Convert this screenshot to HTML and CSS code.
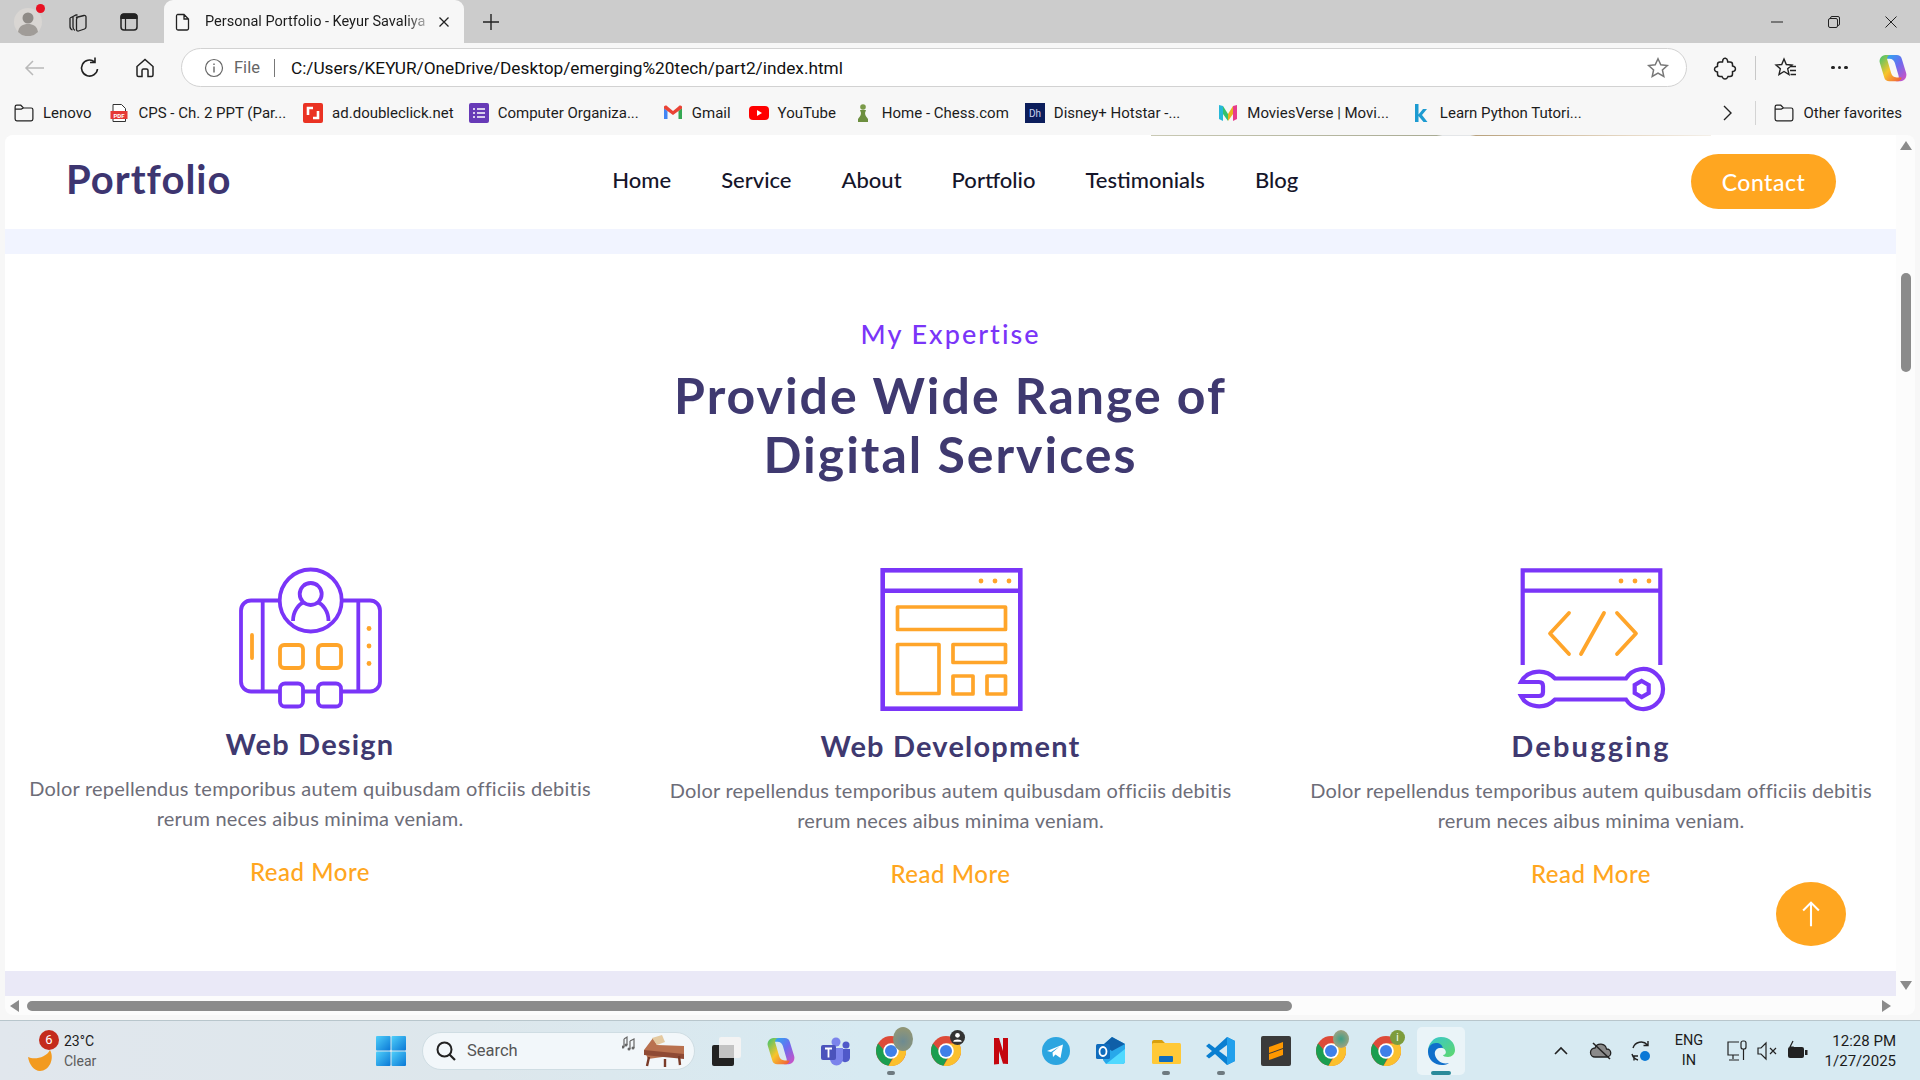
FILE: index.html
```html
<!DOCTYPE html>
<html lang="en">
<head>
<meta charset="utf-8">
<title>Personal Portfolio - Keyur Savaliya</title>
<link rel="stylesheet" href="styles.css">
</head>
<body>
<svg class="defs" width="0" height="0" aria-hidden="true">
  <defs>
    <linearGradient id="cop1" x1="0" y1="0" x2="1" y2="1"><stop offset="0" stop-color="#22b4f0"/><stop offset=".5" stop-color="#6a6cf0"/><stop offset="1" stop-color="#d850c0"/></linearGradient>
    <linearGradient id="cop2" x1="0" y1="0" x2="1" y2="1"><stop offset="0" stop-color="#f0553a"/><stop offset=".5" stop-color="#f7c52c"/><stop offset="1" stop-color="#38c472"/></linearGradient>
    <linearGradient id="win" x1="0" y1="0" x2="1" y2="1"><stop offset="0" stop-color="#4fcffa"/><stop offset="1" stop-color="#0a78d6"/></linearGradient>
    <linearGradient id="edge" x1="0" y1="0" x2="1" y2="1"><stop offset="0" stop-color="#37c6d0"/><stop offset="1" stop-color="#5fd86b"/></linearGradient>
    <symbol id="chrome" viewBox="0 0 24 24">
      <circle cx="12" cy="12" r="12" fill="#dd4b39"/>
      <path d="M1.600 6A12 12 0 0 0 10 23.800L15 14 7 12Z" fill="#1a9e50"/>
      <path d="M22.400 6A12 12 0 0 1 10 23.800L15.500 15 12 6Z" fill="#fbc02d"/>
      <circle cx="12" cy="12" r="6.200" fill="#fff"/>
      <circle cx="12" cy="12" r="4.800" fill="#3f80e8"/>
    </symbol>
    <symbol id="copilot" viewBox="0 0 24 24">
      <path d="M8 1.500H15C17 1.500 18.500 2.500 19 4.500L22.500 16C23.500 19.500 21 22.500 18 22.500H14C16.500 22.500 17 20 16.400 18L13.500 8C13 6 11.500 4.500 9 4.500H5C5.500 3 6.500 1.500 8 1.500Z" fill="url(#cop1)"/>
      <path transform="rotate(180 12 12)" d="M8 1.500H15C17 1.500 18.500 2.500 19 4.500L22.500 16C23.500 19.500 21 22.500 18 22.500H14C16.500 22.500 17 20 16.400 18L13.500 8C13 6 11.500 4.500 9 4.500H5C5.500 3 6.500 1.500 8 1.500Z" fill="url(#cop2)"/>
    </symbol>
    <symbol id="folder" viewBox="1 2 18 16">
      <path d="M2 6V4.500A1.500 1.500 0 0 1 3.500 3h3.600L9.500 5.500H16.500A1.500 1.500 0 0 1 18 7v8.500A1.500 1.500 0 0 1 16.500 17h-13A1.500 1.500 0 0 1 2 15.500ZM2 6.500h5.500L9.500 5.500" fill="none" stroke="#222" stroke-width="1.100"/>
    </symbol>
  </defs>
</svg>

<header class="tabstrip">
  <div class="strip-left">
    <span class="avatar">
      <svg viewBox="0 0 28 28" width="28" height="28"><circle cx="14" cy="14" r="14" fill="#d9d6d3"/><circle cx="14" cy="10" r="5.500" fill="#8f8b87"/><path d="M4 24c1-6 5-8 10-8s9 2 10 8a14 14 0 0 1-20 0Z" fill="#a09c98"/></svg>
      <i class="avatar-dot"></i>
    </span>
    <svg class="ic ic-work" viewBox="0 0 24 24"><path d="M8 6.500 11 5h1.500M5 8 8 6.500M5 8v8.500c0 1.500 1 3 2.500 3.500M8 6.500V17c0 1.500 1 3 2 3.500" fill="none" stroke="#222" stroke-width="1.300"/><path d="M11 7.500 19 5.500c1-.2 2 .5 2 1.500v10c0 1-.5 1.600-1.500 2l-6 2c-1 .3-2-.5-2-1.500V9.500c0-1 .5-1.700 1.500-2Z" fill="none" stroke="#222" stroke-width="1.300"/></svg>
    <svg class="ic" viewBox="0 0 24 24"><rect x="4" y="4" width="16" height="16" rx="3" fill="none" stroke="#222" stroke-width="1.500"/><path d="M4 8.500V7a3 3 0 0 1 3-3h10a3 3 0 0 1 3 3v1.500ZM8.500 8v12" fill="#222" stroke="#222" stroke-width="1.200"/></svg>
  </div>
  <div class="tab">
    <svg class="ic-sm" viewBox="0 0 20 20"><path d="M4.500 2.500h6.500l4.500 4.500v9.500a1.500 1.500 0 0 1-1.500 1.500H5a1.500 1.500 0 0 1-1.500-1.500V4A1.500 1.500 0 0 1 4.500 2.500ZM11 2.500V7h4.500" fill="none" stroke="#222" stroke-width="1.300"/></svg>
    <span class="tab-title">Personal Portfolio - Keyur Savaliya</span>
    <svg class="ic-xs" viewBox="0 0 12 12"><path d="M1.500 1.500l9 9M10.500 1.500l-9 9" stroke="#222" stroke-width="1.300"/></svg>
  </div>
  <svg class="tab-new" viewBox="0 0 20 20"><path d="M10 2v16M2 10h16" stroke="#222" stroke-width="1.400"/></svg>
  <div class="win-ctrls">
    <svg class="ic-xs" viewBox="0 0 12 12"><path d="M0 6h12" stroke="#222" stroke-width="1"/></svg>
    <svg class="ic-xs" viewBox="0 0 12 12"><rect x=".5" y="2.500" width="9" height="9" rx="1.500" fill="none" stroke="#222"/><path d="M2.500 2.500V2A1.500 1.500 0 0 1 4 .5h6A1.500 1.500 0 0 1 11.500 2v6a1.500 1.500 0 0 1-1.500 1.500" fill="none" stroke="#222"/></svg>
    <svg class="ic-xs" viewBox="0 0 12 12"><path d="M.5.5l11 11M11.500.5l-11 11" stroke="#222" stroke-width="1"/></svg>
  </div>
</header>

<nav class="toolbar">
  <div class="tool-nav">
    <svg class="ic" viewBox="0 0 24 24"><path d="M21 12H3.500M10 5l-7 7 7 7" fill="none" stroke="#b9b9b9" stroke-width="1.500"/></svg>
    <svg class="ic" viewBox="0 0 24 24"><path d="M19.500 13a8 8 0 1 1-3-7.200M17 1.500V6.500H12" fill="none" stroke="#222" stroke-width="1.600"/></svg>
    <svg class="ic" viewBox="0 0 24 24"><path d="M4 10.500 12 3.500l8 7V19a1.500 1.500 0 0 1-1.500 1.500H15v-6a1.500 1.500 0 0 0-1.500-1.500h-3A1.500 1.500 0 0 0 9 14.500v6H5.500A1.500 1.500 0 0 1 4 19Z" fill="none" stroke="#222" stroke-width="1.500"/></svg>
  </div>
  <div class="address">
    <svg class="ic-sm" viewBox="0 0 20 20"><circle cx="10" cy="10" r="8.500" fill="none" stroke="#666" stroke-width="1.200"/><path d="M10 8.500v6M10 5.500v1.500" stroke="#666" stroke-width="1.400"/></svg>
    <span class="addr-file">File</span>
    <i class="addr-sep"></i>
    <span class="addr-url">C:/Users/KEYUR/OneDrive/Desktop/emerging%20tech/part2/index.html</span>
    <svg class="ic addr-star" viewBox="0 0 24 24"><path d="M12 2.800l2.800 6 6.500.7-4.900 4.400 1.400 6.500-5.800-3.300-5.800 3.300 1.400-6.500-4.900-4.400 6.500-.7Z" fill="none" stroke="#777" stroke-width="1.500"/></svg>
  </div>
  <div class="tool-right">
    <svg class="ic" viewBox="0 0 24 24"><path d="M10 3.500c1-2 4-1.500 4.500 1l.2 1.500h2.300c1.500 0 2.500 1 2.500 2.500V10l1.500.5c2 .8 2 4-.2 4.700l-1.300.3v2.500c0 1.500-1 2.500-2.500 2.500H15l-.5 1c-1 2-4 2-5 0l-.5-1H7c-1.500 0-2.500-1-2.500-2.500V16l-1.500-.5c-2-.8-2-3.700 0-4.500l1.500-.5V8.500C4.500 7 5.500 6 7 6h2.500Z" fill="none" stroke="#222" stroke-width="1.500"/></svg>
    <i class="tool-sep"></i>
    <svg class="ic" viewBox="0 0 24 24"><path d="M10 3l2.300 5.500 5.700.5-4.300 3.800 1.300 5.700L10 15.500 5 18.500l1.300-5.700L2 9l5.700-.5ZM15.500 10.500H22M16 14.500h6M16.500 18.500H22" fill="none" stroke="#222" stroke-width="1.400"/></svg>
    <span class="dots"><i></i><i></i><i></i></span>
    <svg class="ic-lg" viewBox="0 0 24 24"><use href="#copilot"/></svg>
  </div>
</nav>

<div class="bookmarks">
  <a class="bm bm-lenovo"><svg class="ic-sm" viewBox="0 0 20 20"><use href="#folder"/></svg>Lenovo</a>
  <a class="bm bm-cps"><svg class="ic-sm" viewBox="0 0 20 20"><path d="M4 1.500h8.500L16.500 5.500v13H4Z" fill="#fff" stroke="#333"/><rect x="1.500" y="8" width="17" height="8" fill="#e53935"/><text x="10" y="14.500" class="pdf-t">PDF</text></svg>CPS - Ch. 2 PPT (Par...</a>
  <a class="bm bm-ad"><svg class="ic-sm" viewBox="0 0 20 20"><rect width="20" height="20" rx="2" fill="#ea3223"/><path d="M5 12V5h5M15 8v7h-5" fill="none" stroke="#fff" stroke-width="2.600"/></svg>ad.doubleclick.net</a>
  <a class="bm bm-co"><svg class="ic-sm" viewBox="0 0 20 20"><rect width="20" height="20" rx="2" fill="#673ab7"/><path d="M8 6h8M8 10h8M8 14h8M4 6h2M4 10h2M4 14h2" stroke="#fff" stroke-width="1.700"/></svg>Computer Organiza...</a>
  <a class="bm bm-gm"><svg class="ic-sm" viewBox="0 0 20 20"><path d="M1 5v11h3.500V8Z" fill="#4285f4"/><path d="M15.500 8v8H19V5Z" fill="#34a853"/><path d="M1 3.500v2L10 12l9-6.500v-2c-1-1.500-3-1-3.500 0L10 8 4.500 3.500C4 2.500 2 2 1 3.500Z" fill="#ea4335"/></svg>Gmail</a>
  <a class="bm bm-yt"><svg class="ic-sm" viewBox="0 0 20 20"><rect y="3" width="20" height="14" rx="4" fill="#f00"/><path d="M8 7l5 3-5 3Z" fill="#fff"/></svg>YouTube</a>
  <a class="bm bm-ch"><svg class="ic-sm" viewBox="0 0 20 20"><circle cx="10" cy="4" r="2.800" fill="#7a9a48"/><path d="M7 7h6l-1 3c0 3 2 4 3 6v3H5v-3c1-2 3-3 3-6Z" fill="#6d8f3f"/></svg>Home - Chess.com</a>
  <a class="bm bm-di"><svg class="ic-sm" viewBox="0 0 20 20"><rect width="20" height="20" fill="#0c1e5c"/><text x="10" y="14" class="dh-t">Dh</text></svg>Disney+ Hotstar -...</a>
  <a class="bm bm-mo"><svg class="ic-sm" viewBox="0 0 20 20"><path d="M1 2l4 1v15l-4-2Z" fill="#27b8d8"/><path d="M5 3l5 8v7l-5-7Z" fill="#35c26b"/><path d="M10 11l5-8v8l-5 7Z" fill="#e8b21e"/><path d="M15 3l4-1v14l-4 2Z" fill="#e83c8b"/></svg>MoviesVerse | Movi...</a>
  <a class="bm bm-py"><svg class="ic-sm" viewBox="0 0 20 20"><path d="M4 1h3.500v10.500L12 6h4l-5 6 5.500 7h-4L7.500 13v6H4Z" fill="#1d9bd1"/></svg>Learn Python Tutori...</a>
  <svg class="ic-xs bm-more" viewBox="0 0 12 20"><path d="M2 3l7 7-7 7" fill="none" stroke="#222" stroke-width="1.400"/></svg>
  <i class="bm-sep"></i>
  <a class="bm"><svg class="ic-sm" viewBox="0 0 20 20"><use href="#folder"/></svg>Other favorites</a>
</div>

<div class="window">
  <div class="win-body">
    <main class="page">
      <i class="page-sliver"></i>
      <div class="navbar">
        <span class="logo">Portfolio</span>
        <ul class="menu">
          <li>Home</li><li>Service</li><li>About</li><li>Portfolio</li><li>Testimonials</li><li>Blog</li>
        </ul>
        <a class="contact">Contact</a>
      </div>
      <div class="band band-top"></div>
      <section class="services">
        <p class="eyebrow">My Expertise</p>
        <h2 class="headline">Provide Wide Range of<br>Digital Services</h2>
        <div class="cards">
          <article class="card">
            <svg class="icon icon-a" viewBox="0 0 180 163">
              <g fill="none" stroke="#7a35f8" stroke-width="3.800" stroke-linejoin="round">
                <rect x="21" y="45.500" width="139" height="91" rx="10" />
                <path d="M42.700 45.500v91M138.300 45.500v91"/>
                <circle cx="90.700" cy="45.500" r="31" fill="#fff"/>
                <circle cx="90.700" cy="39" r="11"/>
                <path d="M73 66c0-10 6-17 11-19M108.500 66c0-10-6-17-11-19"/>
                <rect x="60" y="128.500" width="23" height="23" rx="5" fill="#fff"/>
                <rect x="98" y="128.500" width="23" height="23" rx="5" fill="#fff"/>
              </g>
              <g fill="none" stroke="#ffa52a" stroke-width="3.800">
                <path d="M32 80v23" stroke-linecap="round"/>
                <rect x="60" y="90" width="23" height="23" rx="4"/>
                <rect x="98" y="90" width="23" height="23" rx="4"/>
              </g>
              <g fill="#ffa52a"><circle cx="149" cy="73.500" r="2.400"/><circle cx="149" cy="91" r="2.400"/><circle cx="149" cy="108.500" r="2.400"/></g>
            </svg>
            <h3 class="card-title">Web Design</h3>
            <p class="card-text">Dolor repellendus temporibus autem quibusdam officiis debitis rerum neces aibus minima veniam.</p>
            <a class="card-link">Read More</a>
          </article>
          <article class="card">
            <svg class="icon" viewBox="0 0 180 165">
              <g fill="none" stroke="#7a35f8" stroke-width="4.600">
                <rect x="21.700" y="15.300" width="137.600" height="138.400"/>
                <path d="M21.700 35.700h137.600"/>
              </g>
              <g fill="#ffa52a"><circle cx="120" cy="26" r="2.400"/><circle cx="134" cy="26" r="2.400"/><circle cx="148" cy="26" r="2.400"/></g>
              <g fill="none" stroke="#ffa52a" stroke-width="3.700" stroke-linejoin="round">
                <rect x="36.500" y="52" width="108" height="22.500"/>
                <rect x="36.500" y="89.500" width="41.500" height="49"/>
                <rect x="92" y="89.500" width="52.500" height="18"/>
                <rect x="92" y="121" width="20" height="18"/>
                <rect x="126" y="121" width="18.500" height="18"/>
              </g>
            </svg>
            <h3 class="card-title">Web Development</h3>
            <p class="card-text">Dolor repellendus temporibus autem quibusdam officiis debitis rerum neces aibus minima veniam.</p>
            <a class="card-link">Read More</a>
          </article>
          <article class="card">
            <svg class="icon" viewBox="0 0 180 165">
              <g fill="none" stroke="#7a35f8" stroke-width="4.200">
                <path d="M21.700 110V15.300h137.600V110M21.700 35.700h137.600"/>
                <path d="M20 127C26 115 44 113 54 123.500H125A20 20 0 1 1 125 144.500H54C44 155 26 153 20 141H38Q42 141 42 137V131Q42 127 38 127Z"/>
                <path d="M140.700 126l7 4v8l-7 4-7-4v-8Z"/>
              </g>
              <g fill="#ffa52a"><circle cx="120" cy="26" r="2.400"/><circle cx="134" cy="26" r="2.400"/><circle cx="148" cy="26" r="2.400"/></g>
              <path d="M68 58 49 78.500 68 99M103 58 80 99M116 58l19 20.500L116 99" fill="none" stroke="#ffa52a" stroke-width="3.800" stroke-linecap="round" stroke-linejoin="round"/>
            </svg>
            <h3 class="card-title card-title-wide">Debugging</h3>
            <p class="card-text">Dolor repellendus temporibus autem quibusdam officiis debitis rerum neces aibus minima veniam.</p>
            <a class="card-link">Read More</a>
          </article>
        </div>
      </section>
      <div class="band band-bottom"></div>
      <a class="to-top"><svg viewBox="0 0 24 32" width="22" height="28"><path d="M12 30V3M3 12l9-9 9 9" fill="none" stroke="#fff" stroke-width="2.400"/></svg></a>
    </main>
    <div class="vbar">
      <i class="arr arr-up"></i>
      <div class="vtrack"><i class="vthumb"></i></div>
      <i class="arr arr-down"></i>
    </div>
  </div>
  <div class="hbar">
    <i class="arr arr-left"></i>
    <div class="htrack"><i class="hthumb"></i></div>
    <i class="arr arr-right"></i>
  </div>
</div>

<footer class="taskbar">
  <div class="weather">
    <span class="w-icon">
      <svg viewBox="0 0 30 24" width="30" height="24"><path d="M1 9c6 3 18 1 22-7 5 9-1 21-10 21C7 23 2 16 1 9Z" fill="#f29a1f"/></svg>
      <b class="w-badge">6</b>
    </span>
    <span class="w-text"><span>23°C</span><span class="w-sub">Clear</span></span>
  </div>
  <svg class="start" viewBox="0 0 30 30"><g fill="url(#win)"><rect width="14.500" height="14.500" rx="1"/><rect x="15.500" width="14.500" height="14.500" rx="1"/><rect y="15.500" width="14.500" height="14.500" rx="1"/><rect x="15.500" y="15.500" width="14.500" height="14.500" rx="1"/></g></svg>
  <div class="search">
    <svg class="ic" viewBox="0 0 24 24"><circle cx="10.500" cy="10.500" r="7" fill="none" stroke="#222" stroke-width="2"/><path d="M15.500 15.500 21 21" stroke="#222" stroke-width="2.200"/></svg>
    <span class="search-t">Search</span>
    <svg class="piano" viewBox="0 0 64 32"><g fill="none" stroke="#666" stroke-width="1.200"><path d="M2 4v8M2 4l3-2v8M8 6l4-2v9M8 6v8"/></g><g fill="#666"><circle cx="1" cy="12" r="1.500"/><circle cx="4" cy="10" r="1.500"/><circle cx="7" cy="14" r="1.500"/><circle cx="11" cy="13" r="1.500"/></g><path d="M22 15 31 3l4 7 27 1v8L26 24Z" fill="#b9714f"/><path d="M22 15l40 4v5L22 20Z" fill="#8f4a34"/><path d="M30 3l10-3 3 7-8 3Z" fill="#e4c9a0"/><path d="M27 22 25 31M57 21l1 9M43 24v8" stroke="#7a3b28" stroke-width="2.400"/></svg>
  </div>
  <div class="apps">
    <span class="app"><svg class="tb" viewBox="0 0 30 30"><rect x="1" y="9" width="22" height="21" rx="2" fill="#222"/><rect x="8" y="1" width="22" height="21" rx="2" fill="#f3f3f3"/><rect x="8" y="9" width="15" height="13" fill="#c3c3c3"/></svg></span>
    <span class="app"><svg class="tb" viewBox="0 0 24 24"><use href="#copilot"/></svg></span>
    <span class="app"><svg class="tb" viewBox="0 0 30 30"><circle cx="15" cy="6" r="4.500" fill="#7b83eb"/><circle cx="25" cy="9" r="3.500" fill="#5059c9"/><path d="M20 13h9v9a5 5 0 0 1-9 2Z" fill="#5059c9"/><path d="M9 12h13v11a6.500 6.500 0 0 1-13 0Z" fill="#7b83eb"/><rect x="0" y="9" width="15" height="15" rx="2" fill="#4b53bc"/><path d="M4 12.500h7M7.500 12.500v9" stroke="#fff" stroke-width="1.800"/></svg></span>
    <span class="app app-run"><svg class="tb" viewBox="0 0 24 24"><use href="#chrome"/></svg><i class="b-photo"></i></span>
    <span class="app"><svg class="tb" viewBox="0 0 24 24"><use href="#chrome"/></svg><i class="b-dark"><svg viewBox="0 0 14 14"><circle cx="7" cy="5" r="2.200" fill="#fff"/><path d="M3 11c0-3 8-3 8 0Z" fill="#fff"/></svg></i></span>
    <span class="app"><svg class="tb" viewBox="0 0 30 30"><path d="M8 2h5l4 13V2h5v26q-3-.5-5-.2L13 15v13l-5 .5Z" fill="#c4060e"/></svg></span>
    <span class="app"><svg class="tb" viewBox="0 0 30 30"><circle cx="15" cy="15" r="14" fill="#2ca5e0"/><path d="M6 15 22 8.500 19.500 22l-5-3.500-2.500 2.500-.5-4.500 7-6-8.500 5.500Z" fill="#fff"/></svg></span>
    <span class="app"><svg class="tb" viewBox="0 0 30 30"><path d="M16 1 29 8v17q0 3-3 3H10l-3-4V9Z" fill="#28a8ea"/><path d="M16 1 29 8 16 15 7 9Z" fill="#0f5fa8"/><path d="M10 28 29 13v12q0 3-3 3Z" fill="#50d9ff"/><rect y="8" width="14" height="15" rx="1.500" fill="#0f6cbd"/><ellipse cx="7" cy="15.500" rx="3.500" ry="4.500" fill="none" stroke="#fff" stroke-width="1.800"/></svg></span>
    <span class="app app-run"><svg class="tb" viewBox="0 0 30 30"><path d="M1 6a2 2 0 0 1 2-2h8l3 3h13a2 2 0 0 1 2 2v3H1Z" fill="#d8a00e"/><rect x="1" y="7" width="29" height="21" rx="1.500" fill="#ffc938"/><rect x="8" y="20" width="14" height="6" rx="1" fill="#0f6cbd"/></svg></span>
    <span class="app app-run"><svg class="tb" viewBox="0 0 30 30"><path d="M21 1 29 5v20l-8 4L9 18 3 22.500 0 20l6-5-6-5 3-2.500L9 12Z" fill="#0a7fd1"/><path d="M21 9 13 15l8 6Z" fill="#d7eaf2"/><path d="M21 1 29 5v20l-8 4Z" fill="#22a0ec"/></svg></span>
    <span class="app"><svg class="tb" viewBox="0 0 30 30"><rect width="30" height="30" rx="2" fill="#3a3a3a"/><path d="M22 6 8 11v6l14-5ZM22 13 8 18v6l14-5Z" fill="#ff9800"/></svg></span>
    <span class="app"><svg class="tb" viewBox="0 0 24 24"><use href="#chrome"/></svg><i class="b-photo2"></i></span>
    <span class="app"><svg class="tb" viewBox="0 0 24 24"><use href="#chrome"/></svg><i class="b-green">i</i></span>
    <span class="app app-active"><svg class="tb" viewBox="0 0 30 30"><path d="M2 16C2 7 8 1 15 1c9 0 14 6 14 13 0 4-3 7-7 7-3 0-5-1-5-2 4 0 4-6-1-7-6-1-9 3-9 7Z" fill="url(#edge)"/><path d="M2 16c0-6 4-9 8-9 4 0 6 2 7 5-6-1-9 3-8 7 1 5 7 10 14 8-3 2-5 2-7 2C8 29 2 23 2 16Z" fill="#0f6fcb"/></svg></span>
  </div>
  <div class="tray">
    <svg class="tr tr-chev" viewBox="0 0 16 16"><path d="M2 11l6-6 6 6" fill="none" stroke="#222" stroke-width="1.600"/></svg>
    <svg class="tr tr-cloud" viewBox="0 0 24 24"><path d="M6 18a4.500 4.500 0 0 1 0-9 6 6 0 0 1 11.500 1A4 4 0 0 1 18 18Z" fill="#8a8a8a" stroke="#222" stroke-width="1.300"/><path d="M4 4l17 16" stroke="#222" stroke-width="1.600"/></svg>
    <svg class="tr tr-sync" viewBox="0 0 24 24"><path d="M4 9a8.500 8.500 0 0 1 14.500-3M19 2v4.500h-4.500M3 15a8.500 8.500 0 0 0 6 6M5 21.500V17h4" fill="none" stroke="#222" stroke-width="1.400"/><circle cx="16" cy="17" r="5" fill="#0a78d6"/></svg>
    <span class="lang"><span>ENG</span><span>IN</span></span>
    <svg class="tr tr-mon" viewBox="0 0 24 24"><path d="M14 3H3v13h11M8 16v4M4 21h10" fill="none" stroke="#222" stroke-width="1.200"/><rect x="16" y="2" width="5" height="8" rx="2" fill="none" stroke="#222" stroke-width="1.200"/><path d="M18.500 10v11" stroke="#222" stroke-width="1.200"/></svg>
    <svg class="tr tr-vol" viewBox="0 0 24 24"><path d="M3 9v6h3l5 5V4L6 9ZM15 9l6 6M21 9l-6 6" fill="none" stroke="#222" stroke-width="1.200"/></svg>
    <svg class="tr tr-bat" viewBox="0 0 24 24"><rect x="3" y="8" width="16" height="11" rx="2" fill="#222"/><rect x="20" y="11" width="2.500" height="5" fill="#222"/><path d="M8 2 5 8h3L6 13" fill="none" stroke="#222" stroke-width="1.200"/></svg>
    <span class="clock"><span>12:28 PM</span><span>1/27/2025</span></span>
  </div>
</footer>
</body>
</html>
```
FILE: styles.css
```css
* { box-sizing: border-box; }
html, body { margin: 0; padding: 0; }
body {
  width: 1920px;
  height: 1080px;
  overflow: hidden;
  display: flex;
  flex-direction: column;
  background: #f7f7f7;
  font-family: "Roboto", "Noto Sans", sans-serif;
  color: #1c1c1c;
}
.defs { position: absolute; }
i { display: block; font-style: normal; }
svg { display: block; flex: none; }
.ic { width: 24px; height: 24px; }
.ic-sm { width: 20px; height: 20px; }
.ic-xs { width: 12px; height: 12px; }
.ic-lg { width: 30px; height: 30px; }

/* Tab strip */
.tabstrip {
  height: 43px;
  flex: none;
  background: #cccccc;
  display: flex;
  align-items: flex-end;
}
.strip-left {
  width: 164px;
  height: 43px;
  display: flex;
  align-items: center;
  padding-left: 14px;
}
.avatar { position: relative; width: 28px; height: 28px; }
.avatar-dot {
  position: absolute;
  top: -4px;
  right: -3px;
  width: 9px;
  height: 9px;
  border-radius: 50%;
  background: #e81123;
}
.ic-work { margin: 0 28px 0 23px; }
.tab {
  width: 300px;
  height: 43px;
  background: #f7f7f7;
  border-radius: 9px 9px 0 0;
  display: flex;
  align-items: center;
  padding: 0 14px 0 9px;
}
.tab-title {
  flex: 1;
  margin-left: 12px;
  font-size: 14.500px;
  white-space: nowrap;
  overflow: hidden;
  -webkit-mask-image: linear-gradient(90deg, #000 86%, transparent 99%);
  mask-image: linear-gradient(90deg, #000 86%, transparent 99%);
}
.tab-new { width: 20px; height: 20px; margin: 0 0 11px 17px; }
.win-ctrls {
  margin-left: auto;
  height: 43px;
  display: flex;
  align-items: center;
  gap: 45px;
  padding-right: 23px;
}

/* Toolbar */
.toolbar {
  height: 48px;
  flex: none;
  display: flex;
  align-items: flex-end;
  padding-bottom: 4px;
}
.tool-nav {
  width: 181px;
  height: 39px;
  display: flex;
  align-items: center;
  gap: 31px;
  padding-left: 23px;
}
.address {
  width: 1506px;
  height: 39px;
  background: #fff;
  border: 1px solid #d2d2d2;
  border-radius: 20px;
  display: flex;
  align-items: center;
  padding: 0 16px 0 22px;
  font-size: 16.500px;
}
.addr-file { margin-left: 10px; color: #666; }
.addr-sep { width: 1px; height: 18px; margin: 0 16px 0 14px; background: #777; }
.addr-url { color: #111; font-size: 17.250px; }
.addr-star { margin-left: auto; }
.tool-right {
  flex: 1;
  height: 39px;
  display: flex;
  align-items: center;
  padding-left: 26px;
}
.tool-sep { width: 1px; height: 24px; margin: 0 18px; background: #c8c8c8; }
.dots { display: flex; gap: 3px; margin: 0 30px 0 33px; }
.dots i { width: 3.500px; height: 3.500px; border-radius: 50%; background: #222; }

/* Bookmarks */
.bookmarks {
  height: 44px;
  flex: none;
  display: flex;
  align-items: center;
  padding-left: 14px;
  font-size: 15px;
}
.bm {
  display: flex;
  align-items: center;
  gap: 9px;
  white-space: nowrap;
  color: #1c1c1c;
}
.bm-lenovo { margin-right: 18px; }
.bm-cps { margin-right: 17px; }
.bm-ad { margin-right: 15px; }
.bm-co { margin-right: 24px; }
.bm-gm { margin-right: 18px; }
.bm-yt { margin-right: 17px; }
.bm-ch { margin-right: 16px; }
.bm-di { margin-right: 38px; }
.bm-mo { margin-right: 22px; }
.bm-more { height: 20px; margin-left: auto; }
.bm-sep { width: 1px; height: 24px; margin: 0 18px 0 21px; background: #d4d4d4; }
.bookmarks > .bm:last-child { margin-right: 18px; }
.pdf-t { font-size: 6px; font-weight: 700; fill: #fff; text-anchor: middle; }
.dh-t { font-size: 10px; fill: #c9d2ee; text-anchor: middle; }

/* Window */
.window {
  flex: none;
  width: 1910px;
  height: 880px;
  margin: 0 5px 5px;
  background: #fcfcfc;
  border-radius: 8px;
  overflow: hidden;
  display: flex;
  flex-direction: column;
}
.win-body { flex: 1; display: flex; min-height: 0; }
.page {
  position: relative;
  width: 1891px;
  background: #fff;
  display: flex;
  flex-direction: column;
  font-family: "Lato", "Noto Sans", sans-serif;
}
.page-sliver {
  position: absolute;
  top: 0;
  left: 1146px;
  width: 560px;
  height: 1px;
  background: linear-gradient(90deg, #c9c9b4 0%, #a9ab94 51%, #e4e6e8 52%, #e4e6e8 57%, #b9a27e 58%, #e6d8c4 85%, #f4f0ea 100%);
}
.navbar {
  height: 94px;
  flex: none;
  display: flex;
  align-items: center;
  justify-content: space-between;
  padding: 0 60px 0 61px;
}
.logo {
  font-size: 40px;
  font-weight: 700;
  color: #3d3570;
  letter-spacing: 1px;
  padding: 0 10px 6px 0;
}
.menu {
  list-style: none;
  margin: 0 22px 0 0;
  padding: 0 0 5px;
  display: flex;
  gap: 50px;
  font-size: 22px;
  font-weight: 500;
  color: #15152a;
}
.contact {
  width: 145px;
  height: 55px;
  margin-bottom: 1px;
  border-radius: 28px;
  background: #ffa620;
  color: #fff;
  font-size: 23px;
  font-weight: 500;
  display: flex;
  align-items: center;
  justify-content: center;
  letter-spacing: .5px;
}
.band { height: 25px; flex: none; }
.band-top { background: #f1f4ff; }
.band-bottom { background: #eae9f7; }
.services {
  flex: 1;
  padding-top: 63px;
  text-align: center;
}
.eyebrow {
  margin: 0;
  font-size: 27px;
  line-height: 34px;
  font-weight: 500;
  letter-spacing: 2px;
  color: #7a35f8;
}
.headline {
  margin: 15px 0 0;
  font-size: 50px;
  line-height: 59px;
  font-weight: 700;
  letter-spacing: 2px;
  color: #3f3970;
}
.cards {
  display: grid;
  grid-template-columns: repeat(3, 580px);
  column-gap: 60.500px;
  justify-content: center;
  margin-top: 71px;
}
.card { display: flex; flex-direction: column; align-items: center; }
.icon { width: 180px; height: 165px; }
.icon-a { height: 163px; }
.card-title {
  margin: 8px 0 0;
  font-size: 29px;
  line-height: 36px;
  font-weight: 700;
  letter-spacing: 1.200px;
  color: #3f3970;
}
.card-title-wide { letter-spacing: 2.200px; }
.card-text {
  margin: 11px 0 0;
  width: 575px;
  font-size: 20px;
  line-height: 30px;
  letter-spacing: .22px;
  color: #6d6d78;
}
.card-link {
  margin-top: 24px;
  font-size: 24px;
  line-height: 30px;
  font-weight: 500;
  letter-spacing: .55px;
  color: #ffa620;
}
.to-top {
  position: absolute;
  right: 50px;
  bottom: 50px;
  width: 70px;
  height: 64px;
  border-radius: 50%;
  background: #ffa620;
  display: flex;
  align-items: center;
  justify-content: center;
}

/* Page scrollbars */
.vbar {
  width: 19px;
  display: flex;
  flex-direction: column;
  align-items: center;
  padding: 6px 0;
}
.vtrack { flex: 1; width: 10px; padding-top: 123px; }
.vthumb { width: 10px; height: 99px; border-radius: 5px; background: #8b8b8b; }
.hbar {
  height: 19px;
  flex: none;
  display: flex;
  align-items: center;
  padding: 0 24px 0 5px;
}
.htrack { flex: 1; height: 10px; padding-left: 8px; }
.hthumb { width: 1265px; height: 10px; border-radius: 5px; background: #8b8b8b; }
.arr { width: 0; height: 0; border-style: solid; border-color: transparent; flex: none; }
.arr-up { border-width: 0 6.500px 9px; border-bottom-color: #8b8b8b; }
.arr-down { border-width: 9px 6.500px 0; border-top-color: #8b8b8b; }
.arr-left { border-width: 6.500px 9px 6.500px 0; border-right-color: #8b8b8b; }
.arr-right { border-width: 6.500px 0 6.500px 9px; border-left-color: #8b8b8b; }

/* Taskbar */
.taskbar {
  height: 60px;
  flex: none;
  border-top: 1px solid #b8c6cc;
  background: linear-gradient(90deg, #e1e7ed 0%, #dde7ec 25%, #d7eaf2 45%, #d7eaf2 100%);
  display: flex;
  align-items: center;
  font-size: 14px;
}
.weather { width: 376px; display: flex; align-items: center; padding-left: 27px; gap: 10px; }
.w-icon { position: relative; width: 27px; height: 42px; display: flex; align-items: flex-end; }
.w-badge {
  position: absolute;
  top: 0;
  right: -5px;
  width: 20px;
  height: 20px;
  border-radius: 50%;
  background: #c42b1c;
  color: #fff;
  font-size: 13px;
  font-weight: 400;
  text-align: center;
  line-height: 20px;
}
.w-text { display: flex; flex-direction: column; line-height: 20px; }
.w-sub { color: #5c5c5c; }
.start { width: 30px; height: 30px; }
.search {
  width: 273px;
  height: 38px;
  margin-left: 16px;
  border-radius: 19px;
  background: #f2f7fa;
  border: 1px solid #cfdde3;
  display: flex;
  align-items: center;
  padding: 0 8px 0 11px;
}
.search-t { margin-left: 9px; font-size: 16.500px; color: #555; }
.piano { width: 64px; height: 32px; margin-left: auto; }
.apps { display: flex; margin-left: 3px; }
.app {
  position: relative;
  width: 55px;
  height: 48px;
  display: flex;
  align-items: center;
  justify-content: center;
}
.tb { width: 30px; height: 30px; }
.app-run::after, .app-active::after {
  content: "";
  position: absolute;
  bottom: 0;
  left: 50%;
  margin-left: -4px;
  width: 8px;
  height: 4px;
  border-radius: 2px;
  background: #6e7a80;
}
.app-active { background: #eaf4f8; border-radius: 5px; width: 48px; margin-left: 4px; }
.app-active::after { width: 20px; margin-left: -10px; background: #2a8a9a; }
.b-photo, .b-photo2 {
  position: absolute;
  top: 0;
  right: 5px;
  width: 20px;
  height: 24px;
  border-radius: 50%;
  background: radial-gradient(circle at 50% 60%, #6d8b92, #8f9577 70%);
}
.b-photo2 { top: 3px; right: 9px; width: 16px; height: 18px; background: radial-gradient(circle at 50% 50%, #3f9f86, #a8a180 80%); }
.b-dark {
  position: absolute;
  top: 3px;
  right: 8px;
  width: 15px;
  height: 15px;
  border-radius: 50%;
  background: #333;
}
.b-dark svg { width: 15px; height: 15px; }
.b-green {
  position: absolute;
  top: 3px;
  right: 8px;
  width: 15px;
  height: 15px;
  border-radius: 50%;
  background: #7d9c3c;
  color: #fff;
  font-size: 10px;
  text-align: center;
  line-height: 15px;
}
.tray { flex: 1; display: flex; align-items: center; padding: 0 24px 0 88px; }
.tr { width: 24px; height: 24px; }
.tr-chev { width: 16px; height: 16px; margin-right: 20px; }
.tr-sync { margin-left: 16px; }
.lang {
  margin: 0 0 0 18px;
  width: 36px;
  display: flex;
  flex-direction: column;
  align-items: center;
  font-size: 14.500px;
  line-height: 20px;
  white-space: nowrap;
}
.tr-mon { margin-left: 18px; }
.tr-vol { margin-left: 6px; }
.tr-bat { margin-left: 6px; }
.clock {
  margin-left: auto;
  display: flex;
  flex-direction: column;
  align-items: flex-end;
  font-size: 15px;
  line-height: 20px;
  white-space: nowrap;
}
```
